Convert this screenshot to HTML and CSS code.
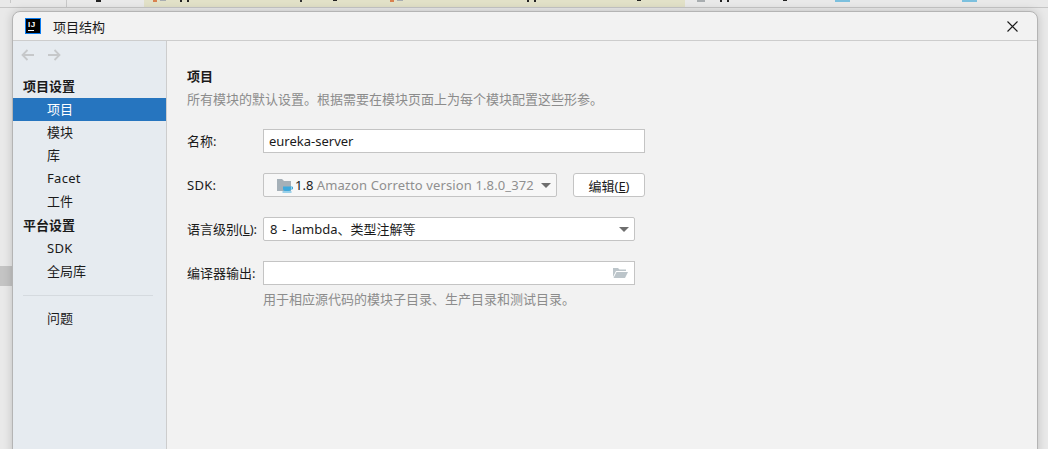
FILE: index.html
```html
<!DOCTYPE html>
<html lang="zh-CN">
<head>
    <meta charset="UTF-8">
    <title>项目结构</title>
    <link rel="stylesheet" href="styles.css">
</head>
<body>
    <!-- Editor tabs peeking out behind the dialog -->
    <div class="tabs-strip">
        <svg class="tab-bits" width="1048" height="7" viewBox="0 0 1048 7">
            <rect x="144" width="541" height="7" fill="#e2e1c8"/>
            <rect x="66" width="1" height="7" fill="#c8c8c8"/>
            <rect x="10" width="1" height="3" fill="#c8c8c8"/>
            <rect x="96" width="5" height="2" fill="#222"/>
            <rect x="153" width="4" height="2" fill="#d9814f"/>
            <rect x="160" width="6" height="1" fill="#a8adb0"/>
            <rect x="180" width="2" height="2" fill="#222"/>
            <rect x="187" width="2" height="2" fill="#222"/>
            <rect x="300" width="2" height="2" fill="#333"/>
            <rect x="333" width="4" height="1" fill="#222"/>
            <rect x="390" width="4" height="2" fill="#d9814f"/>
            <rect x="397" width="6" height="1" fill="#a8adb0"/>
            <rect x="527" width="2" height="2" fill="#222"/>
            <rect x="534" width="2" height="2" fill="#222"/>
            <rect x="637" width="4" height="1" fill="#222"/>
            <rect x="697" width="8" height="2" fill="#a8adb0"/>
            <rect x="720" width="2" height="2" fill="#222"/>
            <rect x="727" width="2" height="2" fill="#222"/>
            <rect x="783" width="4" height="1" fill="#222"/>
            <rect x="835" width="15" height="2" fill="#7cc0de"/>
            <rect x="962" width="15" height="2" fill="#7cc0de"/>
        </svg>
    </div>
    <div class="gutter-mark"></div>

    <div class="dialog">
        <header class="titlebar">
            <svg class="app-icon" width="16" height="16" viewBox="0 0 16 16">
                <rect x="0.5" y="0.5" width="15" height="15" fill="#000" stroke="#0a7cf0"/>
                <text x="3" y="8.5" class="app-icon-text">IJ</text>
                <rect x="3" y="12" width="6" height="1" fill="#fff"/>
            </svg>
            <span class="titlebar-text">项目结构</span>
            <svg class="close-icon" width="11" height="11" viewBox="0 0 11 11">
                <path d="M0.5 0.5 L10.5 10.5 M10.5 0.5 L0.5 10.5" stroke="#1a1a1a" stroke-width="1.1" fill="none"/>
            </svg>
        </header>

        <div class="dialog-body">
            <aside class="sidebar">
                <div class="nav-arrows">
                    <svg width="13" height="12" viewBox="0 0 13 12">
                        <path d="M13 6 H1.5 M6.5 1 L1.5 6 L6.5 11" stroke="#c6c8ca" stroke-width="1.8" fill="none"/>
                    </svg>
                    <svg width="13" height="12" viewBox="0 0 13 12">
                        <path d="M0 6 H11.5 M6.5 1 L11.5 6 L6.5 11" stroke="#c6c8ca" stroke-width="1.8" fill="none"/>
                    </svg>
                </div>
                <div class="nav-heading">项目设置</div>
                <div class="nav-item selected">项目</div>
                <div class="nav-item">模块</div>
                <div class="nav-item">库</div>
                <div class="nav-item latin">Facet</div>
                <div class="nav-item">工件</div>
                <div class="nav-heading second">平台设置</div>
                <div class="nav-item latin">SDK</div>
                <div class="nav-item">全局库</div>
                <div class="nav-divider"></div>
                <div class="nav-item">问题</div>
            </aside>

            <main class="content">
                <h2 class="content-title">项目</h2>
                <p class="content-desc">所有模块的默认设置。根据需要在模块页面上为每个模块配置这些形参。</p>

                <div class="form">
                    <label class="form-label">名称:</label>
                    <div class="field field-wide">eureka-server</div>

                    <label class="form-label latin">SDK:</label>
                    <div class="sdk-row">
                        <div class="field combo sdk-combo">
                            <svg class="sdk-icon" width="16" height="15" viewBox="0 0 16 15">
                                <path d="M0 1 H5 L7 3 H14 V13 H0 Z" fill="#a5b0b8"/>
                                <path d="M6 8.5 H14 V11 Q14 13 12 13 H8 Q6 13 6 11 Z" fill="#3fa9dc"/>
                                <path d="M14 9 H15.5 V11 H14" fill="none" stroke="#3fa9dc"/>
                                <rect x="5.5" y="13.5" width="9" height="1" fill="#3fa9dc"/>
                            </svg>
                            <span class="sdk-text">1.8 <span class="muted">Amazon Corretto version 1.8.0_372</span></span>
                            <span class="combo-arrow"></span>
                        </div>
                        <button class="btn" type="button">编辑(<u>E</u>)</button>
                    </div>

                    <label class="form-label">语言级别(<u>L</u>):</label>
                    <div class="field combo field-mid">
                        <span class="combo-text">8 - lambda、类型注解等</span>
                        <span class="combo-arrow"></span>
                    </div>

                    <label class="form-label">编译器输出:</label>
                    <div class="field field-mid field-path">
                        <svg width="15" height="12" viewBox="0 0 15 12">
                            <path d="M0 1 H5 L6.5 2.5 H13 V4 H3 L0 10 Z" fill="#bcc5ca"/>
                            <path d="M3.5 5 H15 L12 11 H0.5 Z" fill="#bcc5ca"/>
                        </svg>
                    </div>

                    <span></span>
                    <p class="form-hint">用于相应源代码的模块子目录、生产目录和测试目录。</p>
                </div>
            </main>
        </div>
    </div>
</body>
</html>
```

FILE: styles.css
```css
/* Reset */
* {
    box-sizing: border-box;
    margin: 0;
    padding: 0;
}

body {
    height: 100vh;
    overflow: hidden;
    position: relative;
    display: flex;
    flex-direction: column;
    background-color: #e9e9e9;
    font-family: "Noto Sans", "Noto Sans CJK SC", sans-serif;
    font-size: 13px;
    color: #1a1a1a;
}

.latin {
    letter-spacing: 0.3px;
}

/* Tabs behind the dialog */
.tabs-strip {
    height: 8px;
    flex: none;
    border-bottom: 1px solid #c6c6c6;
}

.tab-bits {
    display: block;
}

.gutter-mark {
    position: absolute;
    left: 0;
    top: 266px;
    width: 12px;
    height: 20px;
    background-color: #c4c4c4;
}

/* Dialog window */
.dialog {
    flex: 1;
    width: 1026px;
    margin: 3px 0 -12px 12px;
    display: flex;
    flex-direction: column;
    background-color: #f2f2f2;
    border: 1px solid #b4b4b4;
    border-radius: 8px 8px 0 0;
    box-shadow: 0 0 10px rgba(0, 0, 0, 0.18);
    position: relative;
}

.titlebar {
    height: 29px;
    flex: none;
    display: flex;
    align-items: center;
    padding: 0 19px 0 12px;
    border-bottom: 1px solid #cdcdcd;
}

.app-icon {
    flex: none;
}

.app-icon-text {
    font-family: "Liberation Sans", sans-serif;
    font-size: 8px;
    font-weight: 700;
    letter-spacing: 0.6px;
    fill: #ffffff;
}

.titlebar-text {
    margin-left: 12px;
}

.close-icon {
    margin-left: auto;
}

.dialog-body {
    flex: 1;
    display: flex;
}

/* Left navigation */
.sidebar {
    width: 154px;
    flex: none;
    background-color: #e6ebf0;
    border-right: 1px solid #cdcdcd;
}

.nav-arrows {
    height: 34px;
    display: flex;
    align-items: center;
    gap: 14px;
    padding: 0 0 6px 8px;
}

.nav-heading {
    height: 23px;
    line-height: 23px;
    padding-left: 10px;
    font-weight: 700;
}

.nav-heading.second {
    height: 24px;
    line-height: 25px;
}

.nav-item {
    height: 23px;
    line-height: 23px;
    padding-left: 34px;
}

.nav-item.selected {
    background-color: #2675bf;
    color: #ffffff;
}

.nav-divider {
    height: 1px;
    margin: 12px 13px 11px 10px;
    background-color: #d5dadf;
}

/* Right panel */
.content {
    flex: 1;
    padding: 25px 20px 0;
}

.content-title {
    font-size: 13px;
    font-weight: 700;
    line-height: 20px;
}

.content-desc {
    margin-top: 3px;
    line-height: 20px;
    color: #8c8c8c;
}

.form {
    margin-top: 20px;
    display: grid;
    grid-template-columns: 76px 382px;
    grid-auto-rows: 24px;
    row-gap: 20px;
    align-items: center;
}

.form-label {
    line-height: 24px;
    white-space: nowrap;
}

.field {
    height: 24px;
    padding-left: 5px;
    line-height: 22px;
    background-color: #ffffff;
    border: 1px solid #c4c4c4;
}

.field-mid {
    width: 372px;
}

.combo {
    display: flex;
    align-items: center;
    border-radius: 2px;
}

.combo-text {
    flex: 1;
    padding-left: 1px;
    word-spacing: 1.5px;
}

.combo-arrow {
    flex: none;
    width: 0;
    height: 0;
    margin-right: 5px;
    border-left: 5px solid transparent;
    border-right: 5px solid transparent;
    border-top: 5px solid #6e6e6e;
}

.sdk-row {
    display: flex;
    justify-content: space-between;
}

.sdk-combo {
    width: 294px;
    padding-left: 13px;
    background-color: #f7f7f7;
}

.sdk-icon {
    flex: none;
}

.sdk-text {
    flex: 1;
    margin: 0 6px 0 2px;
    overflow: hidden;
    white-space: nowrap;
}

.muted {
    color: #8f8f8f;
    letter-spacing: 0.12px;
}

.btn {
    width: 72px;
    height: 24px;
    font: inherit;
    color: inherit;
    background-color: #ffffff;
    border: 1px solid #c4c4c4;
    border-radius: 3px;
}

.field-path {
    display: flex;
    align-items: center;
    justify-content: flex-end;
    padding-right: 6px;
}

.form-hint {
    margin-top: -16px;
    align-self: start;
    line-height: 20px;
    color: #8c8c8c;
    white-space: nowrap;
}
```
